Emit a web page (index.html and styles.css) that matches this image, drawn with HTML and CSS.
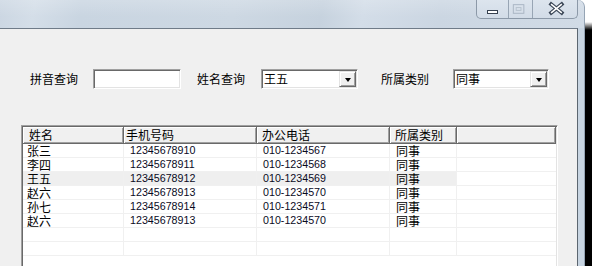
FILE: index.html
```html
<!DOCTYPE html>
<html lang="zh">
<head>
<meta charset="utf-8">
<title>通讯录查询</title>
<link rel="stylesheet" href="styles.css">
</head>
<body>
<div class="screen">
  <div class="window">
    <div class="titlebar">
      <div class="caption-buttons">
        <div class="cap-btn cap-min">
          <svg width="31" height="19" viewBox="0 0 31 19"><rect x="10.5" y="11.5" width="10" height="3" fill="#fff" stroke="#36414f"/></svg>
        </div>
        <div class="cap-btn cap-max">
          <svg width="24" height="19" viewBox="0 0 24 19"><rect x="4.5" y="5.5" width="11" height="9" fill="none" stroke="#a9b5c3"/><rect x="7.5" y="8.5" width="5" height="3" fill="none" stroke="#b7c2ce"/></svg>
        </div>
        <div class="cap-btn cap-close">
          <svg width="46" height="19" viewBox="0 0 46 19"><path d="M19 5 L30 14 M30 5 L19 14" stroke="#3b4757" stroke-width="4" stroke-linecap="square"/><path d="M19.5 5.5 L29.5 13.5 M29.5 5.5 L19.5 13.5" stroke="#fff" stroke-width="1.6" stroke-linecap="square"/></svg>
        </div>
      </div>
    </div>
    <div class="client">
      <div class="query-row">
        <span class="label gap-a">拼音查询</span>
        <div class="textbox w-pinyin gap-b"></div>
        <span class="label gap-b">姓名查询</span>
        <div class="textbox combo w-name gap-c">
          <span class="combo-text">王五</span>
          <span class="combo-btn"><i class="arrow"></i></span>
        </div>
        <span class="label gap-d">所属类别</span>
        <div class="textbox combo w-type">
          <span class="combo-text">同事</span>
          <span class="combo-btn"><i class="arrow"></i></span>
        </div>
      </div>

      <div class="listview">
        <div class="lv-header">
          <div class="hcell c1">姓名</div>
          <div class="hcell c2">手机号码</div>
          <div class="hcell c3">办公电话</div>
          <div class="hcell c4">所属类别</div>
          <div class="hcell c5"></div>
        </div>
        <div class="lv-row">
          <div class="cell c1 name">张三</div><div class="cell c2 num">12345678910</div><div class="cell c3 num">010-1234567</div><div class="cell c4 name">同事</div><div class="cell c5"></div>
        </div>
        <div class="lv-row">
          <div class="cell c1 name">李四</div><div class="cell c2 num">12345678911</div><div class="cell c3 num">010-1234568</div><div class="cell c4 name">同事</div><div class="cell c5"></div>
        </div>
        <div class="lv-row selected">
          <div class="cell c1 name">王五</div><div class="cell c2 num">12345678912</div><div class="cell c3 num">010-1234569</div><div class="cell c4 name">同事</div><div class="cell c5"></div>
        </div>
        <div class="lv-row">
          <div class="cell c1 name">赵六</div><div class="cell c2 num">12345678913</div><div class="cell c3 num">010-1234570</div><div class="cell c4 name">同事</div><div class="cell c5"></div>
        </div>
        <div class="lv-row">
          <div class="cell c1 name">孙七</div><div class="cell c2 num">12345678914</div><div class="cell c3 num">010-1234571</div><div class="cell c4 name">同事</div><div class="cell c5"></div>
        </div>
        <div class="lv-row">
          <div class="cell c1 name">赵六</div><div class="cell c2 num">12345678913</div><div class="cell c3 num">010-1234570</div><div class="cell c4 name">同事</div><div class="cell c5"></div>
        </div>
        <div class="lv-row"><div class="cell c1"></div><div class="cell c2"></div><div class="cell c3"></div><div class="cell c4"></div><div class="cell c5"></div></div>
        <div class="lv-row"><div class="cell c1"></div><div class="cell c2"></div><div class="cell c3"></div><div class="cell c4"></div><div class="cell c5"></div></div>
      </div>
    </div>
  </div>
  <div class="desktop"></div>
</div>
</body>
</html>
```

FILE: styles.css
```css
* { box-sizing: border-box; }

html, body {
  margin: 0;
  padding: 0;
}

body {
  width: 592px;
  height: 266px;
  overflow: hidden;
  background: linear-gradient(to bottom, #ffffff 0, #ffffff 22px, #000000 30px, #000000 100%);
  font-family: "Noto Sans CJK SC", "Noto Sans", sans-serif;
  font-size: 12px;
  color: #000;
}

.screen {
  display: flex;
  height: 266px;
}

.window {
  width: 585px;
  height: 266px;
  display: flex;
  flex-direction: column;
  background: #c8d5e2;
  border-right: 1px solid #95a4b4;
  border-top-right-radius: 7px;
  overflow: hidden;
}

.desktop {
  flex: 1;
}

/* title bar */
.titlebar {
  height: 28px;
  flex: none;
  display: flex;
  justify-content: flex-end;
  align-items: flex-start;
  padding-right: 6px;
  border-top-right-radius: 7px;
  background:
    linear-gradient(to bottom, rgba(255,255,255,0.18), rgba(255,255,255,0) 60%),
    linear-gradient(100deg, #cbd6e2 0%, #d4dee8 6%, #c9d5e1 14%, #cdd8e3 40%, #c6d2de 55%, #d3dde8 62%, #cbd6e2 75%, #d1dbe6 100%);
}

.caption-buttons {
  display: flex;
  height: 20px;
  margin-top: -1px;
  border: 1px solid #8c99a8;
  border-top: none;
  border-radius: 0 0 5px 5px;
  background: linear-gradient(to bottom, #dde5ee, #d2dce7);
  overflow: hidden;
}

.cap-btn {
  height: 19px;
  display: flex;
}

.cap-btn + .cap-btn {
  border-left: 1px solid #98a5b4;
}

.cap-min { width: 31px; }
.cap-max { width: 24px; }
.cap-close { width: 45px; }

/* client area */
.client {
  flex: 1;
  margin-right: 6px;
  background: #f0f0f0;
  border-top: 1px solid #6f7b88;
  border-right: 1px solid #5c6670;
  overflow: hidden;
}

.query-row {
  display: flex;
  align-items: center;
  height: 20px;
  margin-top: 40px;
  padding-left: 30px;
}

.label {
  width: 48px;
  line-height: 20px;
  white-space: nowrap;
}

.gap-a { margin-right: 15px; }
.gap-b { margin-right: 16px; }
.gap-c { margin-right: 23px; }
.gap-d { margin-right: 24px; }

.textbox {
  height: 20px;
  background: #fff;
  border: 1px solid;
  border-color: #a0a0a0 #ffffff #ffffff #a0a0a0;
  box-shadow: inset 1px 1px 0 #696969, inset -1px -1px 0 #e3e3e3;
  padding: 1px;
}

.w-pinyin { width: 88px; }
.w-name { width: 97px; }
.w-type { width: 96px; }

.combo {
  display: flex;
  align-items: stretch;
}

.combo-text {
  flex: 1;
  padding-left: 1px;
  line-height: 16px;
  white-space: nowrap;
}

.combo-btn {
  width: 17px;
  height: 16px;
  display: flex;
  align-items: center;
  justify-content: center;
  background: #f0f0f0;
  border: 1px solid;
  border-color: #e3e3e3 #696969 #696969 #e3e3e3;
  box-shadow: inset 1px 1px 0 #ffffff, inset -1px -1px 0 #a0a0a0;
}

.arrow {
  width: 0;
  height: 0;
  margin-top: 1px;
  border-left: 3.5px solid transparent;
  border-right: 3.5px solid transparent;
  border-top: 4px solid #000;
}

/* list view */
.listview {
  width: 537px;
  height: 146px;
  margin-top: 36px;
  margin-left: 21px;
  background: #fff;
  border: 1px solid;
  border-color: #a0a0a0 #ffffff #ffffff #a0a0a0;
  box-shadow: inset 1px 1px 0 #696969, inset -1px -1px 0 #e3e3e3;
  padding: 1px;
}

.lv-header {
  display: flex;
  height: 17px;
}

.hcell {
  height: 17px;
  background: #f0f0f0;
  border-right: 1px solid #696969;
  border-bottom: 1px solid #696969;
  box-shadow: inset 1px 1px 0 #ffffff, inset -1px -1px 0 #a0a0a0;
  padding-left: 5px;
  line-height: 15px;
  white-space: nowrap;
}

.hcell.c1 { padding-left: 6px; }
.hcell.c2 { padding-left: 2px; }

.c1 { width: 101px; }
.c2 { width: 133px; }
.c3 { width: 133px; }
.c4 { width: 67px; }
.c5 { flex: 1; }

.lv-row {
  display: flex;
  height: 14px;
  border-bottom: 1px solid #f0f0f0;
}

.lv-row.selected .c1,
.lv-row.selected .c2,
.lv-row.selected .c3,
.lv-row.selected .c4 {
  background: #efefef;
}

.cell {
  height: 13px;
  border-right: 1px solid #f0f0f0;
  white-space: nowrap;
}

.cell.c5 { border-right: none; }

.cell.name {
  font-size: 12px;
  line-height: 13px;
}

.cell.num {
  font-family: "Liberation Sans", Arial, sans-serif;
  font-size: 10.7px;
  line-height: 13px;
  color: #0a0a1e;
}

.cell.c1 { padding-left: 4px; }
.cell.c2 { padding-left: 6px; }
.cell.c3 { padding-left: 6px; }
.cell.c4 { padding-left: 6px; }
```
